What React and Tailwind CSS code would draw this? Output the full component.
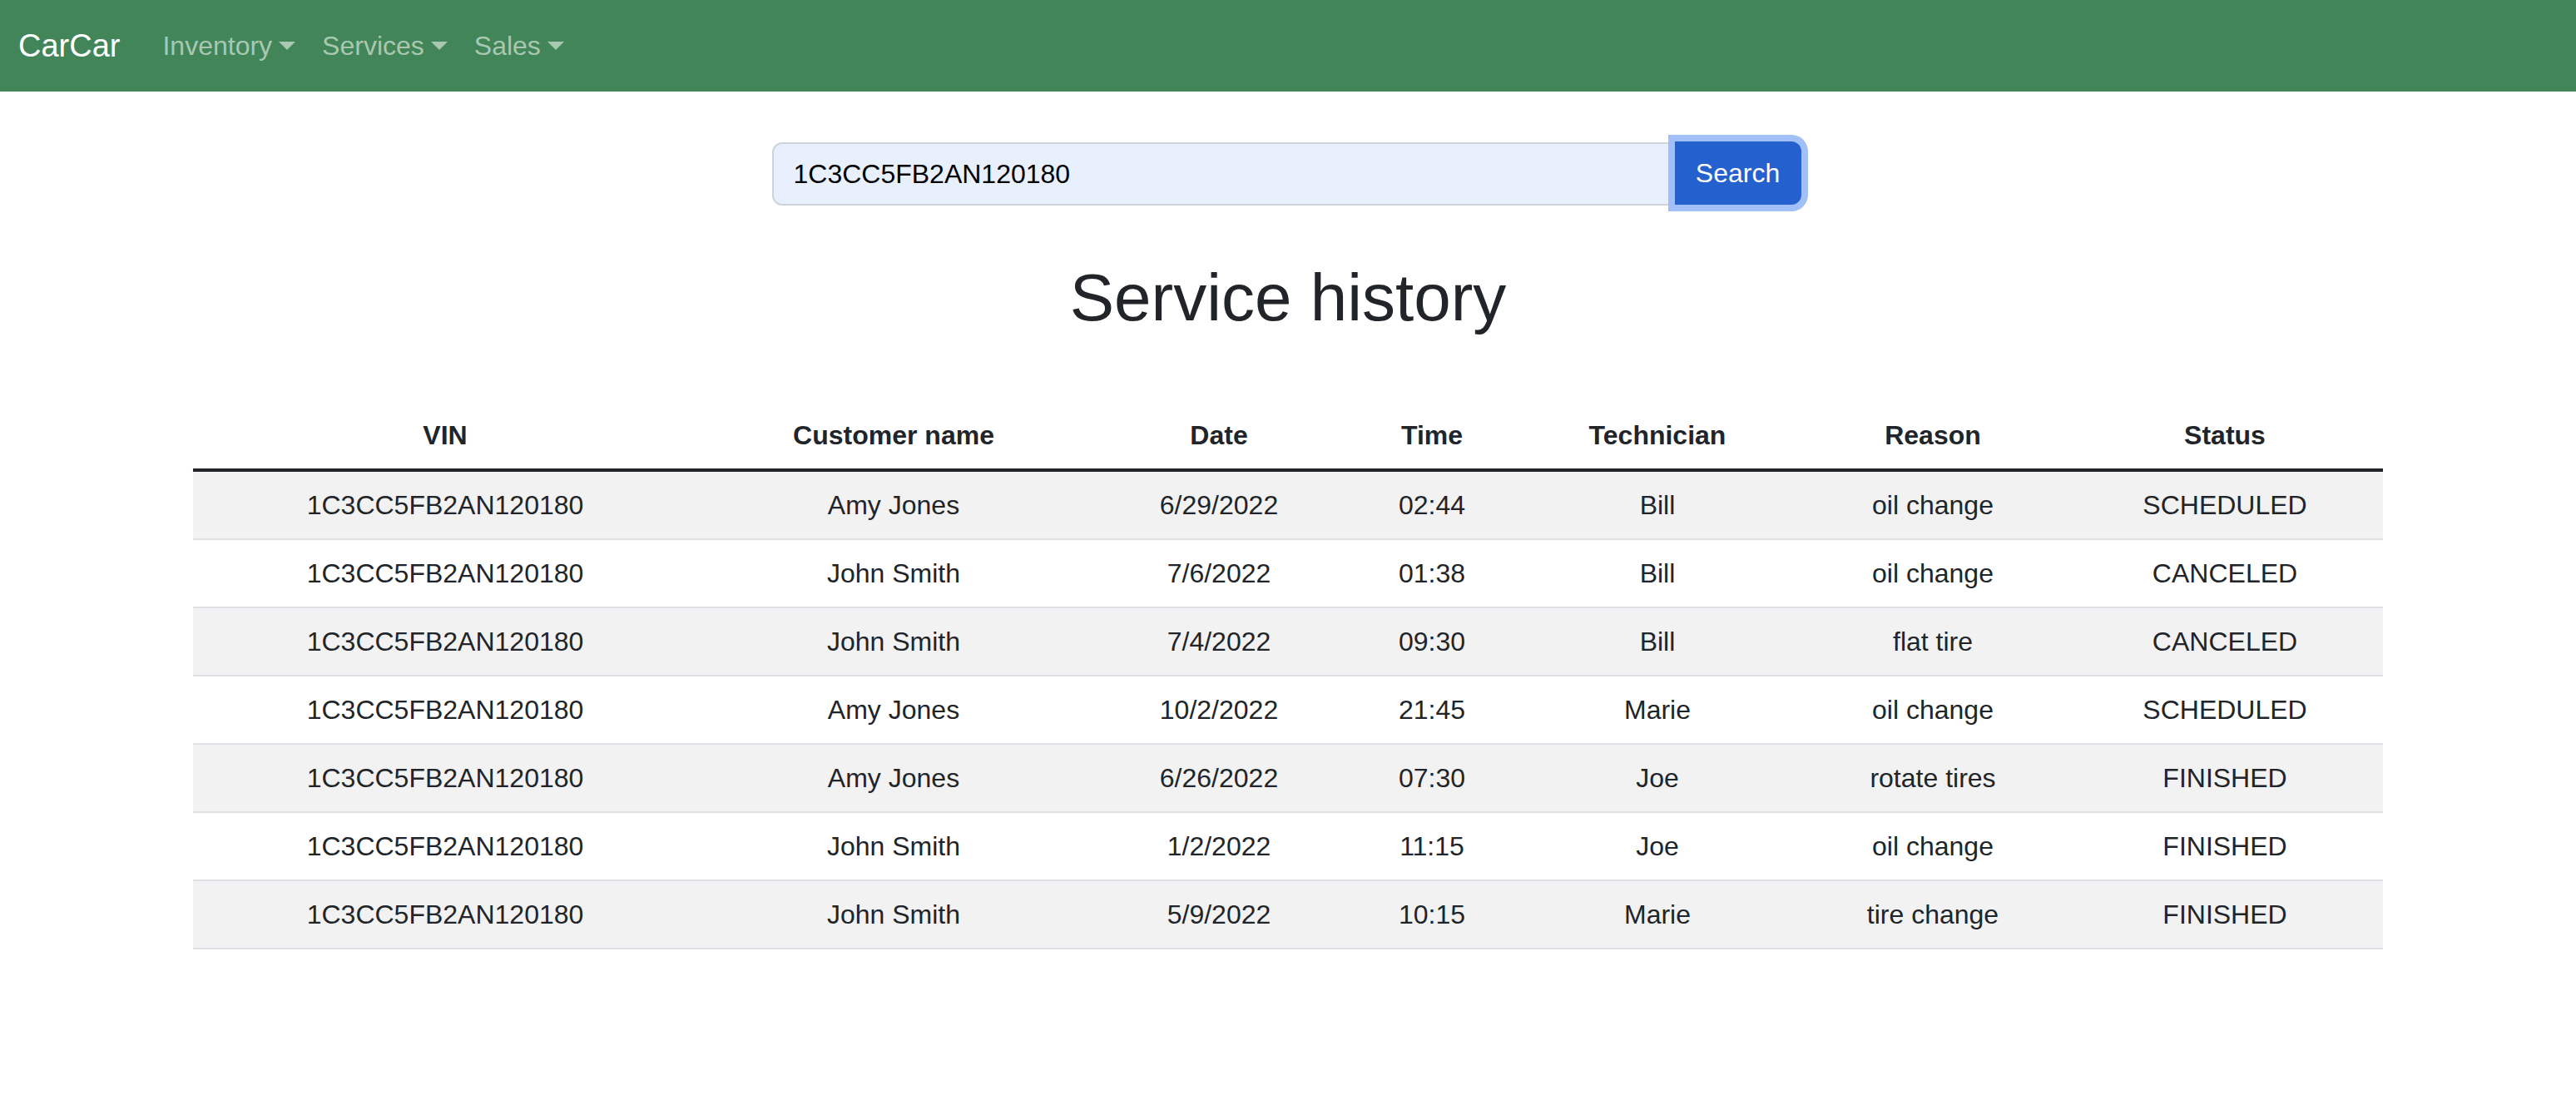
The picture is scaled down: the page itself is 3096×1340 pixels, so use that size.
import React from "react";

const rows = [
  ["1C3CC5FB2AN120180", "Amy Jones", "6/29/2022", "02:44", "Bill", "oil change", "SCHEDULED"],
  ["1C3CC5FB2AN120180", "John Smith", "7/6/2022", "01:38", "Bill", "oil change", "CANCELED"],
  ["1C3CC5FB2AN120180", "John Smith", "7/4/2022", "09:30", "Bill", "flat tire", "CANCELED"],
  ["1C3CC5FB2AN120180", "Amy Jones", "10/2/2022", "21:45", "Marie", "oil change", "SCHEDULED"],
  ["1C3CC5FB2AN120180", "Amy Jones", "6/26/2022", "07:30", "Joe", "rotate tires", "FINISHED"],
  ["1C3CC5FB2AN120180", "John Smith", "1/2/2022", "11:15", "Joe", "oil change", "FINISHED"],
  ["1C3CC5FB2AN120180", "John Smith", "5/9/2022", "10:15", "Marie", "tire change", "FINISHED"],
];

const headers = ["VIN", "Customer name", "Date", "Time", "Technician", "Reason", "Status"];

function Caret() {
  return (
    <span className="ml-[8px] inline-block w-0 h-0 align-[5px] border-t-[10px] border-t-current border-x-[10px] border-x-transparent"></span>
  );
}

function NavItem({ label }) {
  return (
    <a className="flex items-center px-[16px] text-[32px] leading-[48px] text-[#a8c8b2] cursor-pointer">
      {label}
      <Caret />
    </a>
  );
}

export default function App() {
  return (
    <div className="min-h-[1340px] bg-white text-[#212529]" style={{ fontFamily: '"Liberation Sans", Arial, sans-serif' }}>
      <nav className="h-[110px] bg-[#428559] flex items-center pl-[22px]">
        <a className="text-[38px] leading-[60px] text-white mr-[35px]">CarCar</a>
        <div className="flex items-center">
          <NavItem label="Inventory" />
          <NavItem label="Services" />
          <NavItem label="Sales" />
        </div>
      </nav>

      <div className="flex justify-center mt-[60px]">
        <div className="flex w-[1237px] -translate-x-[2px]">
          <div className="w-[1087px] h-[76px] mt-[1px] bg-[#e8f0fe] border-2 border-[#ced4da] rounded-l-[12px] flex items-center pl-[24px] text-[32px] text-black">
            1C3CC5FB2AN120180
          </div>
          <button className="relative -ml-[2px] w-[152px] h-[76px] bg-[#2461cf] border-2 border-[#2461cf] text-white text-[32px] rounded-r-[12px] shadow-[0_0_0_8px_#a1bff8]">
            Search
          </button>
        </div>
      </div>

      <h1 className="mt-[63px] text-center text-[80px] leading-[96px] font-medium">Service history</h1>

      <div className="mt-[77px] mx-auto w-[2632px] text-[32px]">
        <div className="grid grid-cols-[606px_472px_310px_202px_340px_322px_380px] h-[84px] items-center text-center font-bold border-b-4 border-[#212529]">
          {headers.map((h) => (
            <div key={h}>{h}</div>
          ))}
        </div>
        {rows.map((r, i) => (
          <div
            key={i}
            className={
              "grid grid-cols-[606px_472px_310px_202px_340px_322px_380px] h-[82px] items-center text-center border-b-2 border-[#dee2e6] " +
              (i % 2 === 0 ? "bg-[#f2f2f2]" : "bg-white")
            }
          >
            {r.map((c, j) => (
              <div key={j}>{c}</div>
            ))}
          </div>
        ))}
      </div>
    </div>
  );
}
